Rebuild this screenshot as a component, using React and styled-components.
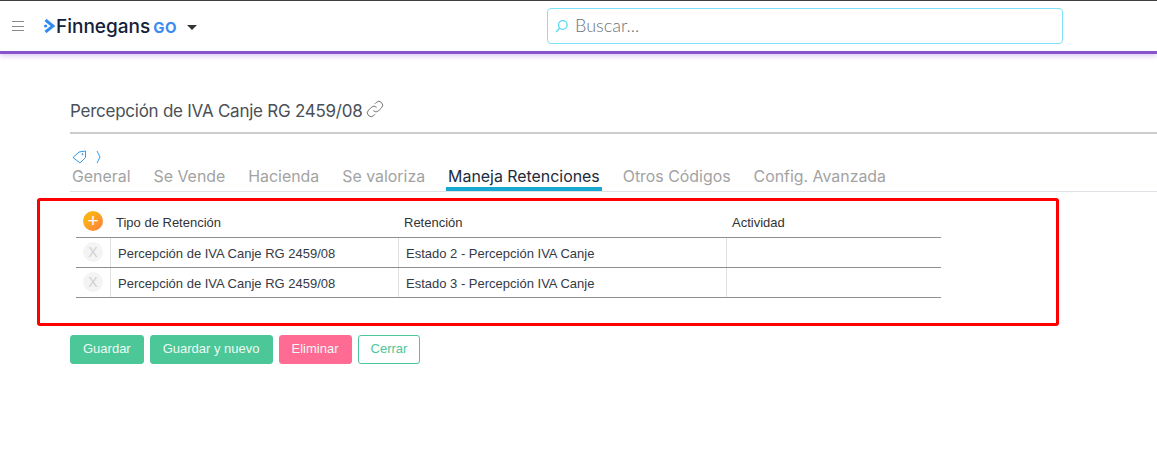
import React from "react";
import styled, { createGlobalStyle } from "styled-components";

const GlobalStyle = createGlobalStyle`
  html, body {
    margin: 0;
    padding: 0;
    background: #fff;
    font-family: "Liberation Sans", Arial, sans-serif;
  }
`;

const Page = styled.div`
  width: 1157px;
  height: 469px;
  overflow: hidden;
  background: #fff;
`;

const Header = styled.header`
  height: 50px;
  display: flex;
  align-items: center;
  border-top: 1px solid #3f3f3f;
  border-bottom: 3px solid #8a55cc;
  box-shadow: 0 2px 5px rgba(138, 85, 204, 0.3);
`;

const Burger = styled.button`
  width: 12px;
  height: 10px;
  margin: 0 0 0 12px;
  padding: 0;
  border: 0;
  background: transparent;
  display: flex;
  flex-direction: column;
  justify-content: space-between;

  span {
    display: block;
    height: 1px;
    background: #8a8a8a;
  }
`;

const Logo = styled.div`
  display: flex;
  align-items: center;
  margin-left: 20px;
  width: 503px;
`;

const LogoName = styled.span`
  font-family: Inter, sans-serif;
  font-size: 19px;
  font-weight: 500;
  color: #14213a;
  margin-left: 1px;
`;

const LogoGo = styled.span`
  font-family: Inter, sans-serif;
  font-size: 15px;
  font-weight: 700;
  letter-spacing: 0.6px;
  color: #3d8bf2;
  margin-left: 3px;
  margin-top: 2px;
`;

const Caret = styled.span`
  width: 0;
  height: 0;
  margin: 3px 0 0 10px;
  border-left: 5px solid transparent;
  border-right: 5px solid transparent;
  border-top: 5px solid #333;
`;

const Search = styled.div`
  width: 516px;
  height: 36px;
  box-sizing: border-box;
  display: flex;
  align-items: center;
  gap: 6px;
  padding-left: 7px;
  border: 1px solid #7fe3f7;
  border-radius: 4px;
`;

const SearchText = styled.span`
  font-family: Lato, sans-serif;
  font-size: 18px;
  font-weight: 300;
  color: #6c757d;
  margin-top: -2px;
`;

const Content = styled.main`
  padding: 41px 0 0 70px;
`;

const TitleRow = styled.div`
  display: flex;
  align-items: center;
  height: 32px;
  border-bottom: 2px solid #cccccc;
  padding-bottom: 5px;
`;

const Title = styled.h1`
  margin: 0;
  font-family: Inter, sans-serif;
  font-size: 17px;
  font-weight: 400;
  letter-spacing: -0.25px;
  color: #495057;
`;

const LinkIcon = styled.svg`
  width: 20px;
  height: 20px;
  margin: -4px 0 0 3px;
  fill: none;
  stroke: #777;
  stroke-width: 1.2;
`;

const TabIcons = styled.div`
  display: flex;
  align-items: center;
  gap: 9px;
  height: 14px;
  margin: 16px 0 0 2px;
`;

const TabBar = styled.nav`
  display: flex;
  gap: 21px;
  height: 28px;
  padding-left: 2px;
  border-bottom: 1px solid #dee2e6;
  box-sizing: border-box;
`;

const Tab = styled.div`
  height: 27px;
  box-sizing: border-box;
  padding: 3px 2px 0;
  margin-left: -2px;
  font-family: Inter, sans-serif;
  font-size: 15.9px;
  white-space: nowrap;
  color: ${(props) => (props.$active ? "#212b3c" : "#a3a3a3")};
  border-bottom: ${(props) => (props.$active ? "4px solid #17a9d1" : "none")};
`;

const Highlight = styled.section`
  width: 980px;
  height: 122px;
  margin: 6px 0 0 -33px;
  padding-left: 36px;
  border: 3px solid #f00;
  border-radius: 3px;
`;

const Table = styled.div`
  width: 865px;
  margin-top: 7px;
  font-size: 13px;
`;

const HeadRow = styled.div`
  display: grid;
  grid-template-columns: 34px 288px 328px 1fr;
  height: 29px;
  align-items: center;
  border-bottom: 1px solid #8f8f8f;
  color: #333;
`;

const HeadCell = styled.div`
  padding-left: 6px;
`;

const Row = styled(HeadRow)`
  color: #343a46;
`;

const Cell = styled.div`
  height: 100%;
  display: flex;
  align-items: center;
  padding: 2px 0 0 7px;
  box-sizing: border-box;
  border-left: 1px solid #e0e0e0;
`;

const AddButton = styled.div`
  width: 20px;
  height: 20px;
  margin: -4px 0 0 7px;
  border-radius: 50%;
  background: linear-gradient(135deg, #fbb116 30%, #fd7a45 100%);
  color: #fff;
  font-size: 19px;
  line-height: 20px;
  text-align: center;
`;

const RemoveButton = styled.div`
  width: 20px;
  height: 20px;
  margin: -1px 0 0 7px;
  border-radius: 50%;
  background: #f4f4f4;
  color: #d0d0d0;
  font-size: 14px;
  line-height: 20px;
  text-align: center;
`;

const Actions = styled.div`
  display: flex;
  gap: 6px;
  margin-top: 9px;
`;

const Button = styled.button`
  height: 29px;
  padding: 0 12px 2px;
  font-family: "Liberation Sans", Arial, sans-serif;
  font-size: 13px;
  border-radius: 3px;
  border: 1px solid ${(props) => props.$bg};
  background: ${(props) => (props.$outline ? "#fff" : props.$bg)};
  color: ${(props) => (props.$outline ? props.$bg : "#eefaf5")};
`;

const tabs = [
  "General",
  "Se Vende",
  "Hacienda",
  "Se valoriza",
  "Maneja Retenciones",
  "Otros Códigos",
  "Config. Avanzada",
];

const rows = [
  ["Percepción de IVA Canje RG 2459/08", "Estado 2 - Percepción IVA Canje"],
  ["Percepción de IVA Canje RG 2459/08", "Estado 3 - Percepción IVA Canje"],
];

export default function App() {
  return (
    <Page>
      <GlobalStyle />
      <Header>
        <Burger aria-label="menu">
          <span />
          <span />
          <span />
        </Burger>
        <Logo>
          <svg width="11" height="14" viewBox="0 0 11 14">
            <path d="M1.5 1 L9 7 L1.5 13" fill="none" stroke="#2e8bf0" strokeWidth="3" />
            <circle cx="1.6" cy="7" r="1.6" fill="#2e8bf0" />
          </svg>
          <LogoName>Finnegans</LogoName>
          <LogoGo>GO</LogoGo>
          <Caret />
        </Logo>
        <Search>
          <svg width="14" height="14" viewBox="0 0 14 14" fill="none" stroke="#55d8f5" strokeWidth="1.3">
            <circle cx="7.8" cy="6" r="4.3" />
            <path d="M4.6 9.2 L1 13" />
          </svg>
          <SearchText>Buscar...</SearchText>
        </Search>
      </Header>
      <Content>
        <TitleRow>
          <Title>Percepción de IVA Canje RG 2459/08</Title>
          <LinkIcon viewBox="0 0 24 24">
            <path d="M10 14a4.5 4.5 0 0 0 6.4 0l3.4-3.4a4.5 4.5 0 0 0-6.4-6.4l-1.6 1.6" />
            <path d="M14 10a4.5 4.5 0 0 0-6.4 0l-3.4 3.4a4.5 4.5 0 0 0 6.4 6.4l1.6-1.6" />
          </LinkIcon>
        </TitleRow>
        <TabIcons>
          <svg width="15" height="14" viewBox="0 0 15 14" fill="none" stroke="#2e9bf0" strokeWidth="1">
            <path d="M1 7.5 L7 2 L13.5 1 L13.5 7.5 L8 13 Z" />
            <circle cx="10.5" cy="4.2" r="0.6" />
          </svg>
          <svg width="5" height="14" viewBox="0 0 5 14" fill="none" stroke="#2e9bf0" strokeWidth="1">
            <path d="M1 1 L4 7 L1 13" />
          </svg>
        </TabIcons>
        <TabBar>
          {tabs.map((tab) => (
            <Tab key={tab} $active={tab === "Maneja Retenciones"}>
              {tab}
            </Tab>
          ))}
        </TabBar>
        <Highlight>
          <Table>
            <HeadRow>
              <AddButton>+</AddButton>
              <HeadCell>Tipo de Retención</HeadCell>
              <HeadCell>Retención</HeadCell>
              <HeadCell>Actividad</HeadCell>
            </HeadRow>
            {rows.map(([tipo, retencion], i) => (
              <Row key={i}>
                <RemoveButton>X</RemoveButton>
                <Cell>{tipo}</Cell>
                <Cell>{retencion}</Cell>
                <Cell />
              </Row>
            ))}
          </Table>
        </Highlight>
        <Actions>
          <Button $bg="#4cc797">Guardar</Button>
          <Button $bg="#4cc797">Guardar y nuevo</Button>
          <Button $bg="#ff6b93">Eliminar</Button>
          <Button $bg="#4cc797" $outline>
            Cerrar
          </Button>
        </Actions>
      </Content>
    </Page>
  );
}
